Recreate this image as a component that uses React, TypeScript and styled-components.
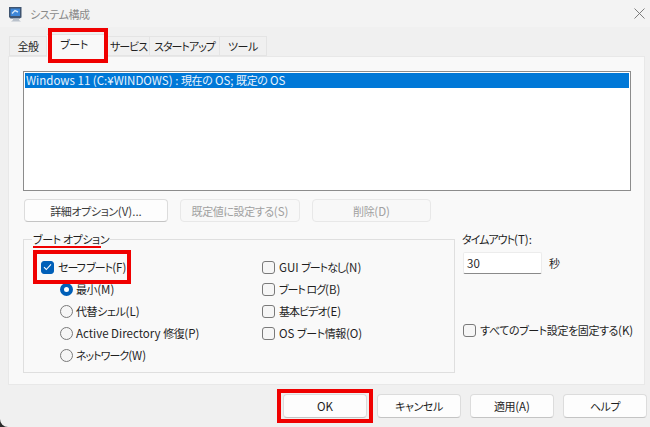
import React from 'react'
import styled, { createGlobalStyle } from 'styled-components'

const GlobalStyle = createGlobalStyle`
  html, body {
    margin: 0;
    padding: 0;
    background: #2b2b2b;
  }
  body {
    width: 650px;
    height: 427px;
    overflow: hidden;
    font-family: "Noto Sans CJK JP", "Noto Sans", sans-serif;
    font-size: 11.5px;
    font-feature-settings: "palt";
    color: #1f1f1f;
  }
`

const tabs = [
  { label: '全般', width: 38 },
  { label: 'ブート', width: 61 },
  { label: 'サービス', width: 42, tight: true },
  { label: 'スタートアップ', width: 70, tight: true },
  { label: 'ツール', width: 47 },
]

export default function App() {
  return (
    <Window>
      <GlobalStyle />
      <TitleBar>
        <AppIcon viewBox="0 0 15 16">
          <path d="M1 1h12.5v10.5l-2 1H2.5L1 11z" fill="#3f5470" />
          <rect x="2.5" y="2.5" width="9.5" height="7.5" fill="#3d86d8" />
          <path d="M4 7.5l3-3 3 1.5" stroke="#d4e6f8" strokeWidth="1.4" fill="none" />
          <path d="M5 12.5h6v1.5l2 1.5H3l2-1.5z" fill="#b9c1cb" />
        </AppIcon>
        <Title>
          <Ja>システム構成</Ja>
        </Title>
        <CloseIcon viewBox="0 0 11 11">
          <path d="M0.5 0.5l10 10M10.5 0.5l-10 10" stroke="#6f6f6f" strokeWidth="0.9" fill="none" />
        </CloseIcon>
      </TitleBar>

      <TabRow>
        {tabs.map((tab, i) => (
          <Tab key={tab.label} $active={i === 1} $width={tab.width}>
            <Ja $tight={tab.tight}>{tab.label}</Ja>
          </Tab>
        ))}
        <TabHighlight />
      </TabRow>

      <Panel>
        <ListBox>
          <ListRow>
            Windows 11 (C:¥WINDOWS) : <Ja>現在の</Ja> OS; <Ja>既定の</Ja> OS
          </ListRow>
        </ListBox>

        <ButtonRow>
          <ActionButton $width={144}>
            <Ja>詳細オプション</Ja>(V)...
          </ActionButton>
          <ActionButton $width={120} disabled>
            <Ja>既定値に設定する</Ja>(S)
          </ActionButton>
          <ActionButton $width={119} disabled>
            <Ja>削除</Ja>(D)
          </ActionButton>
        </ButtonRow>

        <OptionsRow>
          <Group>
            <Legend>
              <Ja>ブート オプション</Ja>
            </Legend>
            <LegendUnderline />
            <SafeHighlight />
            <GroupColumn>
              <Option>
                <CheckBox $checked>
                  <svg width="9" height="8" viewBox="0 0 9 8">
                    <path d="M1 4.2l2.3 2.3L8 1.3" stroke="#fff" strokeWidth="1.1" fill="none" />
                  </svg>
                </CheckBox>
                <span>
                  <Ja $tight>セーフ ブート</Ja>(F)
                </span>
              </Option>
              <RadioOption>
                <Radio $checked />
                <span>
                  <Ja>最小</Ja>(M)
                </span>
              </RadioOption>
              <RadioOption>
                <Radio />
                <span>
                  <Ja>代替シェル</Ja>(L)
                </span>
              </RadioOption>
              <RadioOption>
                <Radio />
                <span>
                  Active Directory <Ja>修復</Ja>(P)
                </span>
              </RadioOption>
              <RadioOption>
                <Radio />
                <span>
                  <Ja $tight>ネットワーク</Ja>(W)
                </span>
              </RadioOption>
            </GroupColumn>
            <GroupColumn $flush>
              <Option>
                <CheckBox />
                <span>
                  GUI <Ja $tight>ブートなし</Ja>(N)
                </span>
              </Option>
              <Option>
                <CheckBox />
                <span>
                  <Ja $tight>ブート ログ</Ja>(B)
                </span>
              </Option>
              <Option>
                <CheckBox />
                <span>
                  <Ja $tight>基本ビデオ</Ja>(E)
                </span>
              </Option>
              <Option>
                <CheckBox />
                <span>
                  OS <Ja>ブート情報</Ja>(O)
                </span>
              </Option>
            </GroupColumn>
          </Group>

          <SideColumn>
            <TimeoutLabel>
              <Ja $tight>タイムアウト</Ja>(T):
            </TimeoutLabel>
            <TimeoutRow>
              <TimeoutField>30</TimeoutField>
              <Ja>秒</Ja>
            </TimeoutRow>
            <PersistOption>
              <CheckBox />
              <span>
                <Ja>すべてのブート設定を固定する</Ja>(K)
              </span>
            </PersistOption>
          </SideColumn>
        </OptionsRow>
      </Panel>

      <Footer>
        <OkWrap>
          <FooterButton>OK</FooterButton>
        </OkWrap>
        <FooterButton>
          <Ja>キャンセル</Ja>
        </FooterButton>
        <FooterButton>
          <Ja>適用</Ja>(A)
        </FooterButton>
        <FooterButton>
          <Ja>ヘルプ</Ja>
        </FooterButton>
      </Footer>
    </Window>
  )
}

// Yu Gothic UI kana run narrower than Noto's, so Japanese runs are tightened
const Ja = styled.span<{ $tight?: boolean }>`
  font-size: 11px;
  letter-spacing: ${({ $tight }) => ($tight ? '-1px' : '-0.4px')};
`

const Window = styled.div`
  width: 650px;
  height: 427px;
  background: #f0f0f0;
  border-bottom-left-radius: 8px;
  display: flex;
  flex-direction: column;
  overflow: hidden;
`

const TitleBar = styled.div`
  height: 27px;
  flex-shrink: 0;
  display: flex;
  align-items: center;
  padding: 0 5px 0 8px;
  background: #f3f3f3;
`

const AppIcon = styled.svg`
  width: 15px;
  height: 16px;
  margin-right: 7px;
`

const Title = styled.span`
  color: #8a8a8a;
  flex: 1;
`

const CloseIcon = styled.svg`
  width: 11px;
  height: 11px;
`

const TabRow = styled.div`
  position: relative;
  z-index: 1;
  height: 29px;
  flex-shrink: 0;
  display: flex;
  align-items: flex-end;
  padding-left: 9px;
  background: #f0f0f0;
`

const Tab = styled.div<{ $active?: boolean; $width: number }>`
  width: ${({ $width }) => $width}px;
  height: ${({ $active }) => ($active ? '23px' : '20px')};
  margin-bottom: ${({ $active }) => ($active ? '-1px' : '0')};
  padding: ${({ $active }) => ($active ? '0 6px 3px 0' : '0')};
  display: flex;
  align-items: center;
  justify-content: center;
  box-sizing: border-box;
  background: ${({ $active }) => ($active ? '#f9f9f9' : '#f0f0f0')};
  border: 1px solid #e4e4e4;
  border-bottom: ${({ $active }) => ($active ? 'none' : '1px solid #e4e4e4')};
  border-left: none;
  line-height: 1;
  white-space: nowrap;
  &:first-child {
    border-left: 1px solid #e4e4e4;
  }
`

const TabHighlight = styled.div`
  position: absolute;
  left: 48px;
  top: 1px;
  width: 60px;
  height: 35px;
  box-sizing: border-box;
  border: 4px solid #f00000;
`

const Panel = styled.div`
  width: 637px;
  height: 329px;
  margin-left: 8px;
  flex-shrink: 0;
  box-sizing: border-box;
  padding: 14px 13px 0 14px;
  background: #f9f9f9;
  border: 1px solid #e8e8e8;
  display: flex;
  flex-direction: column;
`

const ListBox = styled.div`
  height: 120px;
  flex-shrink: 0;
  box-sizing: border-box;
  padding: 1px;
  background: #fff;
  border: 1px solid #8c8c8c;
`

const ListRow = styled.div`
  height: 15px;
  line-height: 15px;
  padding-left: 1px;
  background: #0078d7;
  color: #e9f3fc;
`

const ButtonRow = styled.div`
  display: flex;
  gap: 12px;
  margin: 8px 0 0 1px;
`

const ActionButton = styled.div<{ disabled?: boolean; $width: number }>`
  width: ${({ $width }) => $width}px;
  height: 23px;
  box-sizing: border-box;
  display: flex;
  align-items: center;
  justify-content: center;
  border-radius: 4px;
  border: 1px solid ${({ disabled }) => (disabled ? '#e8e8e8' : '#dcdcdc')};
  border-bottom-color: ${({ disabled }) => (disabled ? '#e8e8e8' : '#c4c4c4')};
  color: ${({ disabled }) => (disabled ? '#a0a0a0' : '#3a3a3a')};
  background: ${({ disabled }) => (disabled ? '#f8f8f8' : '#fdfdfd')};
`

const OptionsRow = styled.div`
  display: flex;
  margin-top: 17px;
`

const Group = styled.div`
  position: relative;
  width: 432px;
  height: 134px;
  flex-shrink: 0;
  box-sizing: border-box;
  border: 1px solid #dfdfdf;
  display: grid;
  grid-template-columns: 238px 1fr;
  padding-top: 16px;
`

const Legend = styled.span`
  position: absolute;
  left: 8px;
  top: -8px;
  padding: 0 1px;
  background: #f9f9f9;
  line-height: 15px;
  white-space: nowrap;
`

const LegendUnderline = styled.div`
  position: absolute;
  left: 9px;
  top: 6px;
  width: 68px;
  height: 2px;
  background: #f00000;
`

const SafeHighlight = styled.div`
  position: absolute;
  left: 9px;
  top: 10px;
  width: 98px;
  height: 34px;
  box-sizing: border-box;
  border: 4px solid #f00000;
`

const GroupColumn = styled.div<{ $flush?: boolean }>`
  display: flex;
  flex-direction: column;
  padding-left: ${({ $flush }) => ($flush ? '0' : '17px')};
`

const Option = styled.div`
  display: flex;
  align-items: center;
  gap: 4px;
  height: 22px;
  white-space: nowrap;
`

const RadioOption = styled(Option)`
  padding-left: 19px;
  gap: 3px;
`

const CheckBox = styled.span<{ $checked?: boolean }>`
  width: 13px;
  height: 13px;
  box-sizing: border-box;
  flex-shrink: 0;
  display: inline-flex;
  align-items: center;
  justify-content: center;
  border-radius: 3px;
  border: 1px solid ${({ $checked }) => ($checked ? '#005fb8' : '#7a7a7a')};
  background: ${({ $checked }) => ($checked ? '#005fb8' : '#f6f6f6')};
`

const Radio = styled.span<{ $checked?: boolean }>`
  width: 13px;
  height: 13px;
  box-sizing: border-box;
  flex-shrink: 0;
  border-radius: 50%;
  border: ${({ $checked }) => ($checked ? '4px solid #005fb8' : '1px solid #7a7a7a')};
  background: ${({ $checked }) => ($checked ? '#fff' : '#f6f6f6')};
`

const SideColumn = styled.div`
  display: flex;
  flex-direction: column;
  margin-left: 7px;
  margin-top: -7px;
`

const TimeoutLabel = styled.div`
  line-height: 15px;
`

const TimeoutRow = styled.div`
  display: flex;
  align-items: center;
  gap: 7px;
  margin-top: 5px;
  margin-left: 1px;
`

const TimeoutField = styled.div`
  width: 79px;
  height: 22px;
  box-sizing: border-box;
  padding-left: 3px;
  display: flex;
  align-items: center;
  background: #fff;
  border: 1px solid #ececec;
  border-bottom: 1px solid #8a8a8a;
  border-radius: 2px;
`

const PersistOption = styled(Option)`
  margin-top: 45px;
  margin-left: 1px;
`

const Footer = styled.div`
  flex: 1;
  display: flex;
  align-items: center;
  justify-content: flex-end;
  gap: 9px;
  padding-right: 3px;
`

const OkWrap = styled.div`
  width: 96px;
  height: 34px;
  margin-right: -5px;
  box-sizing: border-box;
  border: 4px solid #f00000;
  display: flex;
  align-items: center;
  justify-content: center;
`

const FooterButton = styled.div`
  width: 84px;
  height: 24px;
  box-sizing: border-box;
  display: flex;
  align-items: center;
  justify-content: center;
  background: #fdfdfd;
  border: 1px solid #dcdcdc;
  border-bottom-color: #c4c4c4;
  border-radius: 4px;
`
